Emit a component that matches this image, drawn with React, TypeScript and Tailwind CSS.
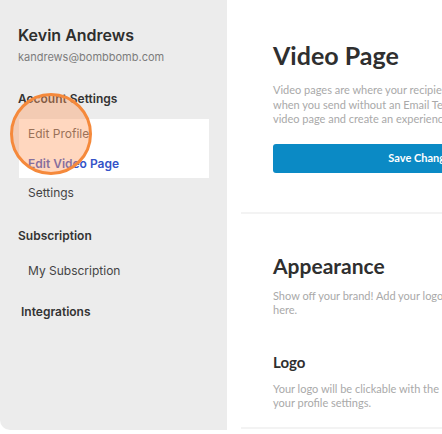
import React from 'react';

const sideFont = { fontFamily: 'Inter, "Noto Sans", sans-serif' };
const mainFont = { fontFamily: 'Lato, "Open Sans", sans-serif' };

function Sidebar() {
  return (
    <aside
      style={sideFont}
      className="relative w-[227px] h-[430px] shrink-0 bg-[#ececec] rounded-bl-[10px] pt-[25px] px-[18px]"
    >
      <div className="text-[16px] leading-[20px] font-semibold text-[#2e2e2e]">Kevin Andrews</div>
      <div className="mt-[5px] text-[11px] leading-[14px] text-[#7c7c7c]">kandrews@bombbomb.com</div>

      <div className="mt-[27px] text-[12px] leading-[16px] font-semibold text-[#333]">Account Settings</div>
      <div className="mt-[12px] ml-[1px] w-[190px] bg-white">
        <div className="h-[30px] flex items-center pl-[9px] text-[12px] text-[#555]">Edit Profile</div>
        <div className="h-[29px] flex items-center pl-[9px] text-[12px] font-semibold text-[#3553c8]">
          Edit Video Page
        </div>
      </div>
      <div className="h-[30px] flex items-center pl-[10px] text-[12px] text-[#444]">Settings</div>

      <div className="mt-[20px] text-[12px] leading-[16px] font-semibold text-[#333]">Subscription</div>
      <div className="mt-[12px] h-[30px] flex items-center pl-[10px] text-[12px] text-[#444]">My Subscription</div>

      <div className="mt-[18px] ml-[3px] text-[12px] leading-[16px] font-semibold text-[#333]">Integrations</div>

      {/* highlight marker */}
      <div className="absolute left-[10px] top-[93px] w-[82px] h-[82px] rounded-full border-[3px] border-[#f5893b] bg-[#ff9b5e]/40" />
    </aside>
  );
}

function Main() {
  return (
    <main style={mainFont} className="flex-1 min-w-0 overflow-hidden">
      <div className="ml-[14px] w-[420px]">
        <section className="pl-[32px] pt-[41px] pb-[39px] border-b-2 border-[#f3f3f3]">
          <h1 className="text-[25px] leading-[29px] font-bold text-[#2f2f2f] whitespace-nowrap">Video Page</h1>
          <p className="mt-[13px] text-[11px] leading-[14.5px] text-[#a9a9a9] whitespace-nowrap">
            <span className="block">Video pages are where your recipients land</span>
            <span className="block">when you send without an Email Template. Customize your</span>
            <span className="block">video page and create an experience that's all you.</span>
          </p>
          <button className="mt-[17px] w-[298px] h-[29px] rounded-[3px] bg-[#0b8ac5] text-white text-[11px] font-bold">
            Save Changes
          </button>
        </section>

        <section className="pl-[32px] pt-[39px] pb-[17px] border-b-2 border-[#f3f3f3]">
          <h2 className="text-[21px] leading-[25px] font-bold text-[#2f2f2f]">Appearance</h2>
          <p className="mt-[11px] text-[11px] leading-[14px] text-[#a9a9a9] whitespace-nowrap">
            <span className="block">Show off your brand! Add your logo and colors</span>
            <span className="block">here.</span>
          </p>
          <h3 className="mt-[36px] text-[15px] leading-[19px] font-bold text-[#2f2f2f]">Logo</h3>
          <p className="mt-[10px] text-[11px] leading-[14px] text-[#a9a9a9] whitespace-nowrap">
            <span className="block">Your logo will be clickable with the link from</span>
            <span className="block">your profile settings.</span>
          </p>
        </section>
      </div>
    </main>
  );
}

export default function App() {
  return (
    <div className="w-[442px] h-[434px] overflow-hidden bg-white flex">
      <Sidebar />
      <Main />
    </div>
  );
}
